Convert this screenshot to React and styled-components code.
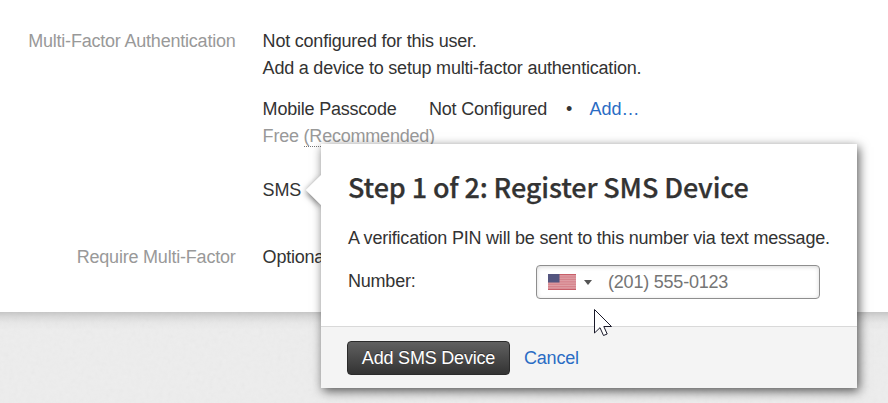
import React from "react";
import styled, { createGlobalStyle } from "styled-components";

const GlobalStyle = createGlobalStyle`
  * { box-sizing: border-box; }
  body { margin: 0; overflow: hidden; }
`;

const Page = styled.div`
  position: relative;
  width: 888px;
  height: 403px;
  overflow: hidden;
  display: flex;
  flex-direction: column;
  background: #fff;
  font: 18px/27px "Liberation Sans", Arial, sans-serif;
  letter-spacing: -0.21px;
  color: #333;
  white-space: nowrap;
`;

const Settings = styled.main`
  height: 312px;
  padding-top: 28px;
  display: grid;
  grid-template-columns: 235.6px 1fr;
  grid-template-rows: 216px 27px;
  column-gap: 27px;
`;

const Label = styled.div`
  text-align: right;
  color: #999;
`;

const Value = styled.div`
  color: #333;
`;

const Device = styled.div`
  margin-top: ${(p) => p.$gap}px;
`;

const DeviceRow = styled.div`
  display: grid;
  grid-template-columns: 166.4px 137px 23.4px auto;
`;

const Hint = styled.div`
  color: #999;
`;

const Abbr = styled.span`
  display: inline-block;
  height: 24px;
  border-bottom: 1px dotted #777;
`;

const Link = styled.a`
  color: #2a6cc4;
  text-decoration: none;
  cursor: pointer;
`;

const Ellipsis = styled.span`
  letter-spacing: 0;
`;

const Backdrop = styled.div`
  position: relative;
  flex: 1;
  background: linear-gradient(#c6c6c6, #dadada 5px, #e8e8e8 11px, #ededed 18px);
`;

const Texture = styled.svg`
  position: absolute;
  inset: 0;
  width: 100%;
  height: 100%;
  opacity: 0.05;
`;

const Popover = styled.section`
  position: absolute;
  left: 321px;
  top: 144px;
  width: 536px;
  height: 244px;
  display: flex;
  flex-direction: column;
  background: #fff;
  box-shadow: 2px 3px 10px rgba(0, 0, 0, 0.65);
`;

const Arrow = styled.svg`
  position: absolute;
  left: -27px;
  top: 20px;
  width: 27px;
  height: 56px;
`;

const PopoverBody = styled.div`
  flex: 1;
  padding: 26px 27px 0;
`;

const Title = styled.h2`
  margin: 0 0 21px;
  font: 500 27px/34px "Noto Sans CJK SC", sans-serif;
  letter-spacing: -0.12px;
  -webkit-text-stroke: 0.25px #333;
  color: #333;
`;

const Field = styled.div`
  display: flex;
  justify-content: space-between;
  margin-top: 13px;
  padding-right: 10px;
  line-height: 33px;
`;

const PhoneInput = styled.div`
  display: flex;
  align-items: center;
  width: 284px;
  height: 34px;
  padding-left: 11px;
  border: 1px solid #8e8e8e;
  border-radius: 4px;
  box-shadow: inset 0 1px 4px rgba(0, 0, 0, 0.16);
  color: #757575;
`;

const Flag = styled.svg`
  width: 28px;
  height: 16px;
`;

const Caret = styled.svg`
  width: 8px;
  height: 5px;
  margin: 0 16px 0 8px;
`;

const PopoverFooter = styled.footer`
  display: flex;
  height: 62px;
  padding: 14px 26px;
  gap: 14px;
  border-top: 1px solid #d9d9d9;
  background: #f4f4f4;
  line-height: 34px;
`;

const PrimaryButton = styled.button`
  width: 163px;
  height: 34px;
  padding: 0;
  border: 1px solid #2b2b2b;
  border-radius: 4px;
  background: linear-gradient(#606060, #333);
  color: #fff;
  font: 18px/32px "Liberation Sans", Arial, sans-serif;
  letter-spacing: -0.2px;
  text-shadow: 0 -1px 0 rgba(0, 0, 0, 0.4);
`;

const Cursor = styled.svg`
  position: absolute;
  left: 594px;
  top: 309px;
  width: 19px;
  height: 28px;
`;

const stripes = [0, 1, 2, 3, 4, 5, 6];

export default function App() {
  return (
    <Page>
      <GlobalStyle />
      <Settings>
        <Label>Multi-Factor Authentication</Label>
        <Value>
          <div>Not configured for this user.</div>
          <div>Add a device to setup multi-factor authentication.</div>
          <Device $gap={14}>
            <DeviceRow>
              <span>Mobile Passcode</span>
              <span>Not Configured</span>
              <span>•</span>
              <Link>
                <Ellipsis>Add…</Ellipsis>
              </Link>
            </DeviceRow>
            <Hint>
              Free <Abbr>(Recommended)</Abbr>
            </Hint>
          </Device>
          <Device $gap={27}>SMS</Device>
        </Value>
        <Label>Require Multi-Factor</Label>
        <Value>Optional</Value>
      </Settings>
      <Backdrop>
        <Texture>
          <filter id="grain">
            <feTurbulence type="fractalNoise" baseFrequency="0.22" numOctaves="2" />
            <feColorMatrix type="saturate" values="0" />
          </filter>
          <rect width="100%" height="100%" filter="url(#grain)" />
        </Texture>
      </Backdrop>
      <Popover>
        <Arrow viewBox="0 0 27 56">
          <defs>
            <filter id="arrowShadow" x="-60%" y="-30%" width="220%" height="170%">
              <feDropShadow dx="0" dy="2" stdDeviation="3.2" floodOpacity="0.6" />
            </filter>
          </defs>
          <path d="M27 11 12 26 27 41Z" fill="#fff" filter="url(#arrowShadow)" />
        </Arrow>
        <PopoverBody>
          <Title>Step 1 of 2: Register SMS Device</Title>
          <div>A verification PIN will be sent to this number via text message.</div>
          <Field>
            <span>Number:</span>
            <PhoneInput>
              <Flag viewBox="0 0 28 16">
                <rect width="28" height="16" fill="#dfa0a6" />
                {stripes.map((i) => (
                  <rect key={i} y={i * 2.4} width="28" height="1.3" fill="#d6848d" />
                ))}
                <path d="M0 .5H28M0 15.5H28" stroke="#c85f69" />
                <rect width="11.5" height="8.5" fill="#54557f" />
              </Flag>
              <Caret viewBox="0 0 8 5">
                <path d="M0 0H8L4 5Z" fill="#555" />
              </Caret>
              <span>(201) 555-0123</span>
            </PhoneInput>
          </Field>
        </PopoverBody>
        <PopoverFooter>
          <PrimaryButton>Add SMS Device</PrimaryButton>
          <Link>Cancel</Link>
        </PopoverFooter>
      </Popover>
      <Cursor viewBox="0 0 19 28">
        <path
          d="M.5 .5V24L6 18.7 9.5 26.5 13.2 25 9.8 17.5H17.5Z"
          fill="#fff"
          stroke="#1a1a2a"
        />
      </Cursor>
    </Page>
  );
}
